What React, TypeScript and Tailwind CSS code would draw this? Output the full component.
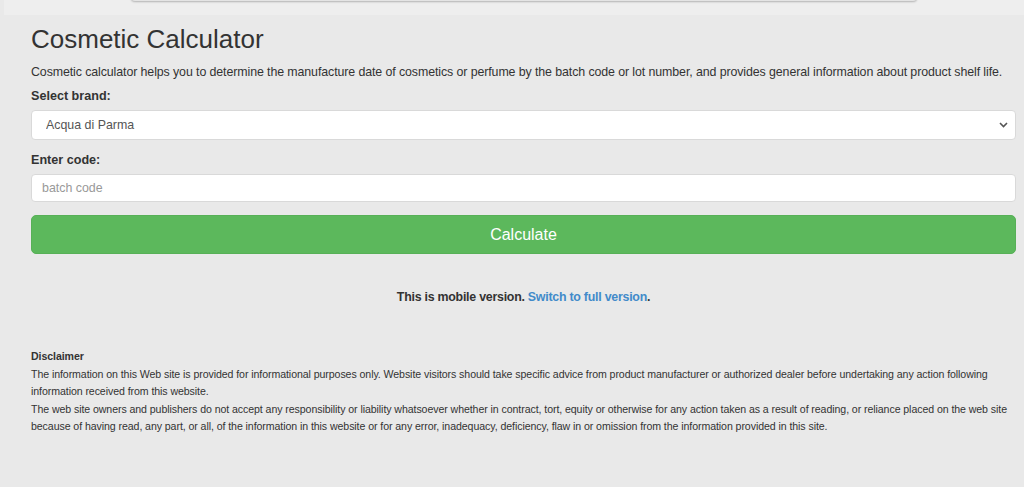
import React from "react";

export default function App() {
  return (
    <div className="min-h-[487px] w-full bg-[#e9e9e9] text-[#333] font-['Liberation_Sans',Arial,sans-serif] overflow-hidden">
      {/* scrolled-off header strip */}
      <div className="ml-[4px] h-[15px] bg-[#eeeeee] relative">
        <div className="absolute left-[127px] w-[786px] top-[-4px] h-[5px] bg-[#e4e4e4] rounded-b shadow-[0_1px_2px_rgba(0,0,0,0.25)]" />
      </div>

      <div className="ml-[31px] mr-[8px]">
        <h1 className="text-[26px] leading-[30px] mt-[9px] font-normal">Cosmetic Calculator</h1>
        <p className="text-[12.4px] tracking-[-0.1px] leading-[18px] mt-[9px]">
          Cosmetic calculator helps you to determine the manufacture date of cosmetics or perfume by the batch code or lot number, and provides general information about product shelf life.
        </p>

        <label className="block text-[12.6px] font-bold leading-[18px] mt-[6px]">Select brand:</label>
        <div className="relative mt-[5px]">
          <select
            defaultValue="acqua"
            className="appearance-none w-full h-[30px] bg-white border border-[#d9d9d9] rounded-[4px] pl-[14px] text-[12.4px] text-[#555] outline-none"
          >
            <option value="acqua">Acqua di Parma</option>
          </select>
          <svg className="absolute right-[8px] top-[12px] w-[9px] h-[6px]" viewBox="0 0 9 6" fill="none">
            <path d="M1 1l3.5 3.5L8 1" stroke="#555" strokeWidth="1.6" />
          </svg>
        </div>

        <label className="block text-[12.6px] font-bold leading-[18px] mt-[11px]">Enter code:</label>
        <input
          placeholder="batch code"
          className="block w-full h-[28px] mt-[5px] bg-white border border-[#d9d9d9] rounded-[4px] px-[10px] text-[12.4px] placeholder:text-[#999] outline-none"
        />

        <button className="block w-full h-[39px] mt-[13px] bg-[#5cb85c] border border-[#57b057] rounded-[5px] text-white text-[16px]">
          Calculate
        </button>

        <p className="text-center text-[12.4px] tracking-[-0.25px] font-bold mt-[34px] leading-[18px]">
          This is mobile version. <a className="text-[#428bca]">Switch to full version</a>.
        </p>

        <div className="mt-[42px] text-[10.6px] tracking-[-0.08px] leading-[17.5px]">
          <div className="font-bold">Disclaimer</div>
          <p>
            The information on this Web site is provided for informational purposes only. Website visitors should take specific advice from product manufacturer or authorized dealer before undertaking any action following information received from this website.
          </p>
          <p>
            The web site owners and publishers do not accept any responsibility or liability whatsoever whether in contract, tort, equity or otherwise for any action taken as a result of reading, or reliance placed on the web site because of having read, any part, or all, of the information in this website or for any error, inadequacy, deficiency, flaw in or omission from the information provided in this site.
          </p>
        </div>
      </div>
    </div>
  );
}
